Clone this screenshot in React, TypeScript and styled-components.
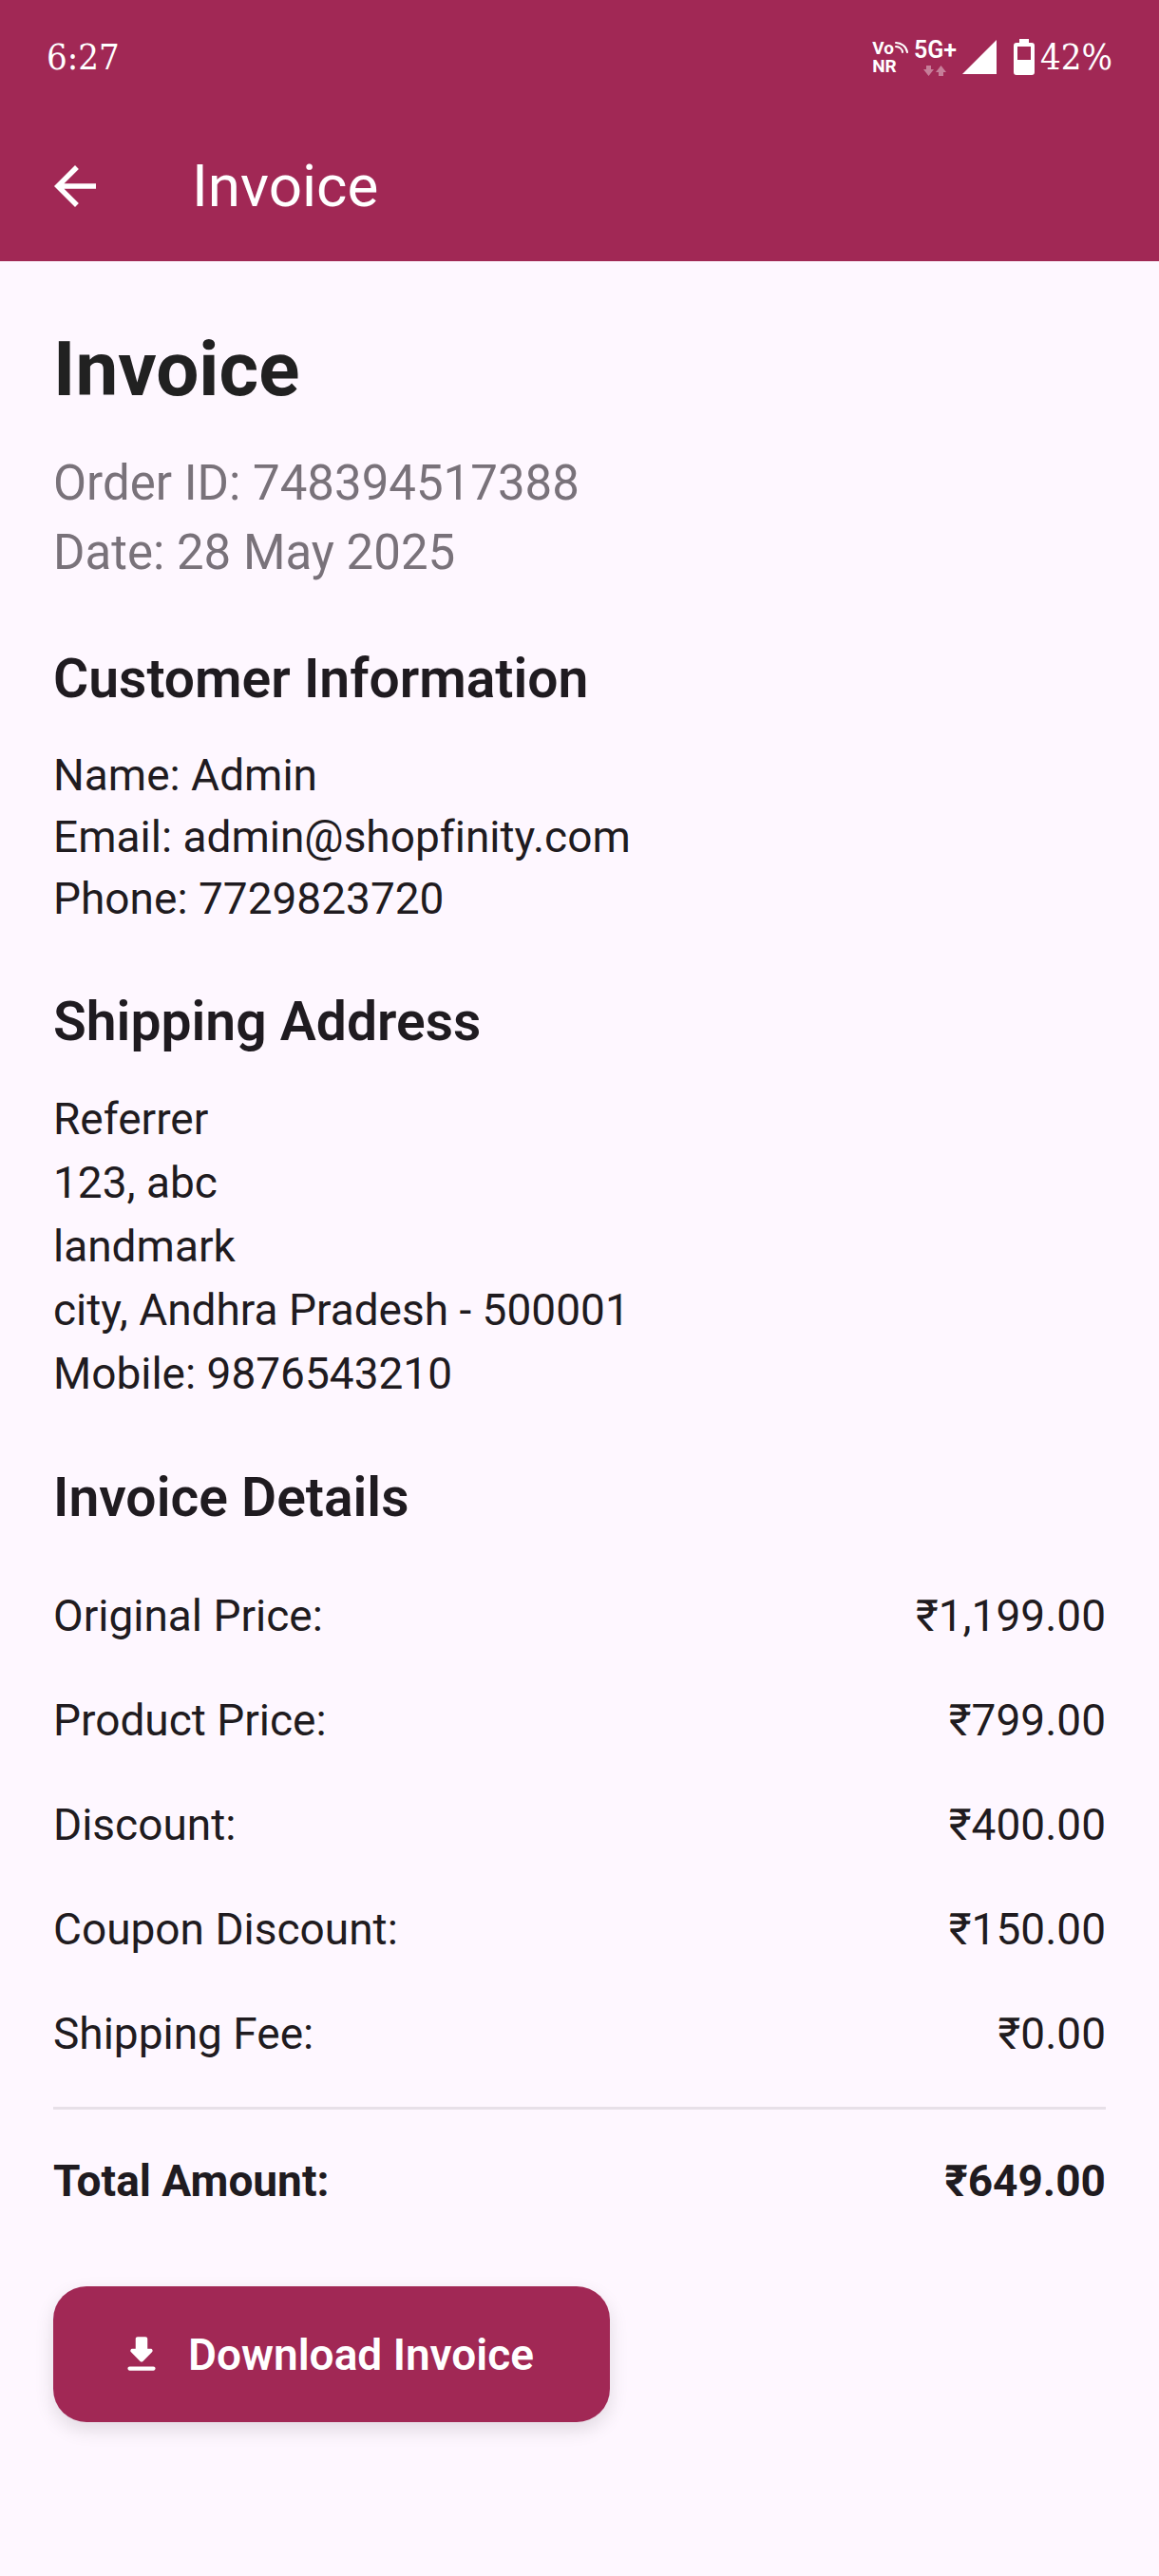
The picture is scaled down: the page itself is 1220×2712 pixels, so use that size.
import React from "react";
import styled, { createGlobalStyle } from "styled-components";

const colors = {
  brand: "#a12855",
  surface: "#fef7ff",
  ink: "#212121",
  text: "#1f1b20",
  muted: "#79727a",
  line: "#e7e0e8",
};

const GlobalStyle = createGlobalStyle`
  *, *::before, *::after { box-sizing: border-box; }
  body {
    margin: 0;
    background: ${colors.surface};
    color: ${colors.text};
    font-family: Roboto, "Noto Sans", sans-serif;
    font-variant-ligatures: none;
  }
  h1, h2, p, dl, dd, address { margin: 0; font-style: normal; }
  svg { display: block; flex: none; }
`;

const Page = styled.div`
  min-height: 100vh;
`;

const Header = styled.header`
  background: ${colors.brand};
  color: #fff;
`;

const StatusBar = styled.div`
  display: flex;
  align-items: center;
  justify-content: space-between;
  height: 117px;
  padding: 2px 49px 0;
`;

const StatusText = styled.span`
  font-family: "Roboto Slab", "DejaVu Serif Condensed", "DejaVu Serif", serif;
  font-size: 38px;
  line-height: 48px;
`;

const StatusIcons = styled.div`
  display: flex;
  align-items: center;
  gap: 6px;
`;

const VoiceBadge = styled.div`
  display: flex;
  flex-direction: column;
  font-size: 19px;
  font-weight: 700;
  line-height: 19px;
`;

const VoiceTop = styled.span`
  display: flex;
  align-items: center;
  gap: 1px;
`;

const NetworkBadge = styled.div`
  display: flex;
  flex-direction: column;
  align-items: center;
  gap: 2px;
  font-size: 25px;
  font-weight: 600;
  line-height: 28px;
`;

const SignalIcon = styled.svg`
  margin-right: 12px;
`;

const AppBar = styled.div`
  display: flex;
  align-items: center;
  gap: 90px;
  height: 158px;
  padding: 0 46px;
`;

const BackButton = styled.button`
  display: flex;
  padding: 0;
  border: 0;
  background: none;
  color: inherit;
`;

const AppTitle = styled.div`
  font-size: 62px;
  line-height: 80px;
`;

const Main = styled.main`
  padding: 68px 56px 162px;
`;

const Title = styled.h1`
  color: ${colors.ink};
  font-size: 80px;
  font-weight: 700;
  line-height: 92px;
`;

const Meta = styled.div`
  margin-top: 37px;
  color: ${colors.muted};
  font-size: 51px;
  line-height: 73px;
`;

const Section = styled.section`
  margin-top: 59px;
`;

const SectionTitle = styled.h2`
  font-size: 57px;
  font-weight: 600;
  line-height: 76px;
`;

const Lines = styled.div<{ $pitch: number }>`
  margin-top: 31px;
  font-size: 46px;
  line-height: ${(p) => p.$pitch}px;
`;

const Rows = styled.dl`
  margin-top: 31px;
`;

const Row = styled.div<{ $total?: boolean }>`
  display: flex;
  justify-content: space-between;
  font-size: 46px;
  line-height: 110px;
  font-weight: ${(p) => (p.$total ? 700 : 400)};
`;

const Divider = styled.hr`
  height: 3px;
  margin: 22px 0 20px;
  border: 0;
  background: ${colors.line};
`;

const DownloadButton = styled.button`
  display: flex;
  align-items: center;
  gap: 24px;
  height: 143px;
  margin-top: 56px;
  padding: 0 80px 0 68px;
  border: 0;
  border-radius: 35px;
  background: ${colors.brand};
  color: #fff;
  font-family: inherit;
  font-size: 46px;
  font-weight: 600;
  box-shadow: 0 8px 20px rgba(0, 0, 0, 0.12);
`;

const prices = [
  ["Original Price:", "₹1,199.00"],
  ["Product Price:", "₹799.00"],
  ["Discount:", "₹400.00"],
  ["Coupon Discount:", "₹150.00"],
  ["Shipping Fee:", "₹0.00"],
];

export default function App() {
  return (
    <Page>
      <GlobalStyle />
      <Header>
        <StatusBar>
          <StatusText>6:27</StatusText>
          <StatusIcons>
            <VoiceBadge>
              <VoiceTop>
                Vo
                <svg width="14" height="14" viewBox="0 0 14 14" fill="none" stroke="currentColor" strokeWidth="2" strokeLinecap="round">
                  <path d="M1 2c6 0 11 4 12 10M1 6c4 0 7 3 7 6" />
                </svg>
              </VoiceTop>
              <span>NR</span>
            </VoiceBadge>
            <NetworkBadge>
              5G+
              <svg width="24" height="11" viewBox="0 0 24 11" fill="currentColor" opacity="0.4">
                <path d="M3 0h5v4h3L5.500 11 0 4h3zM16 11h5V7h3l-5.500-7L13 7h3z" />
              </svg>
            </NetworkBadge>
            <SignalIcon width="36" height="36" viewBox="0 0 36 36" fill="currentColor">
              <path d="M36 0v36H0z" />
            </SignalIcon>
            <svg width="22" height="38" viewBox="0 0 22 38" fill="currentColor">
              <path
                fillRule="evenodd"
                d="M6 0h10v4h3a3 3 0 0 1 3 3v28a3 3 0 0 1-3 3H3a3 3 0 0 1-3-3V7a3 3 0 0 1 3-3h3zM4 8v14h14V8z"
              />
            </svg>
            <StatusText>42%</StatusText>
          </StatusIcons>
        </StatusBar>
        <AppBar>
          <BackButton type="button" aria-label="Back">
            <svg width="66" height="66" viewBox="0 0 24 24" fill="currentColor">
              <path d="M20 11H7.83l5.59-5.59L12 4l-8 8 8 8 1.41-1.41L7.83 13H20v-2z" />
            </svg>
          </BackButton>
          <AppTitle>Invoice</AppTitle>
        </AppBar>
      </Header>
      <Main>
        <Title>Invoice</Title>
        <Meta>
          <p>Order ID: 748394517388</p>
          <p>Date: 28 May 2025</p>
        </Meta>
        <Section>
          <SectionTitle>Customer Information</SectionTitle>
          <Lines $pitch={65}>
            <p>Name: Admin</p>
            <p>Email: admin@shopfinity.com</p>
            <p>Phone: 7729823720</p>
          </Lines>
        </Section>
        <Section>
          <SectionTitle>Shipping Address</SectionTitle>
          <Lines as="address" $pitch={67}>
            <p>Referrer</p>
            <p>123, abc</p>
            <p>landmark</p>
            <p>city, Andhra Pradesh - 500001</p>
            <p>Mobile: 9876543210</p>
          </Lines>
        </Section>
        <Section>
          <SectionTitle>Invoice Details</SectionTitle>
          <Rows>
            {prices.map(([label, value]) => (
              <Row key={label}>
                <dt>{label}</dt>
                <dd>{value}</dd>
              </Row>
            ))}
          </Rows>
          <Divider />
          <Row as="p" $total>
            <span>Total Amount:</span>
            <span>₹649.00</span>
          </Row>
        </Section>
        <DownloadButton type="button">
          <svg width="50" height="50" viewBox="0 0 24 24" fill="currentColor">
            <path d="M16.59 9H15V4c0-.55-.45-1-1-1h-4c-.55 0-1 .45-1 1v5H7.41c-.89 0-1.34 1.08-.71 1.71l4.59 4.59c.39.39 1.02.39 1.41 0l4.59-4.59c.63-.63.19-1.71-.7-1.71zM5 19c0 .55.45 1 1 1h12c.55 0 1-.45 1-1s-.45-1-1-1H6c-.55 0-1 .45-1 1z" />
          </svg>
          Download Invoice
        </DownloadButton>
      </Main>
    </Page>
  );
}
